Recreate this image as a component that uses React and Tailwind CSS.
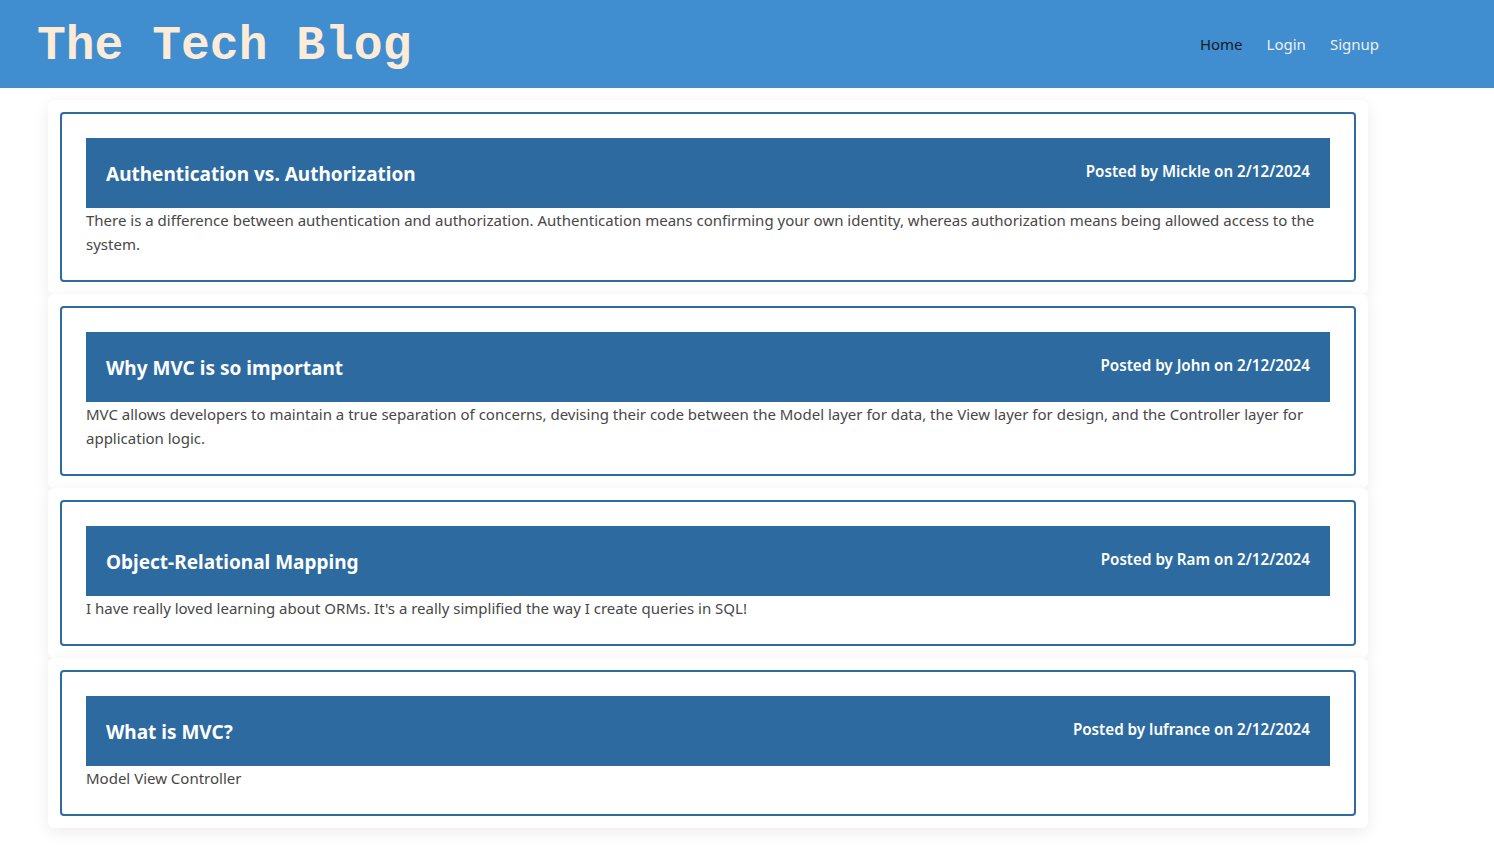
import React from 'react';

const posts = [
  {
    title: 'Authentication vs. Authorization',
    author: 'Mickle',
    date: '2/12/2024',
    body: 'There is a difference between authentication and authorization. Authentication means confirming your own identity, whereas authorization means being allowed access to the system.',
  },
  {
    title: 'Why MVC is so important',
    author: 'John',
    date: '2/12/2024',
    body: 'MVC allows developers to maintain a true separation of concerns, devising their code between the Model layer for data, the View layer for design, and the Controller layer for application logic.',
  },
  {
    title: 'Object-Relational Mapping',
    author: 'Ram',
    date: '2/12/2024',
    body: "I have really loved learning about ORMs. It's a really simplified the way I create queries in SQL!",
  },
  {
    title: 'What is MVC?',
    author: 'lufrance',
    date: '2/12/2024',
    body: 'Model View Controller',
  },
];

function PostCard({ post }) {
  return (
    <div className="bg-white rounded-md shadow-[0_4px_16px_rgba(0,0,0,0.08)] p-3">
      <div className="border-2 border-[#2d6a9f] rounded-[4px] p-6">
        <div className="bg-[#2d6a9f] h-[70px] px-5 flex items-center justify-between text-white">
          <h2 className="text-[19px] font-bold pt-[2px]">{post.title}</h2>
          <p className="text-[15.2px] font-semibold pb-[4px]">
            Posted by {post.author} on {post.date}
          </p>
        </div>
        <p className="text-[15px] leading-6 text-[#474747]">{post.body}</p>
      </div>
    </div>
  );
}

export default function App() {
  return (
    <div className="min-h-screen bg-white font-['Noto_Sans','Open_Sans',sans-serif]">
      <header className="h-[88px] bg-[#408dcf] flex items-center justify-between pl-[37px] pr-[115px]">
        <h1 className="font-['Liberation_Mono','Courier_New',monospace] font-bold text-[48px] text-[#fbebd7] leading-none pt-1">
          The Tech Blog
        </h1>
        <nav className="flex items-center gap-6 text-[15px]">
          <a className="text-[#141c2b]">Home</a>
          <a className="text-[#eef0f0]">Login</a>
          <a className="text-[#eef0f0]">Signup</a>
        </nav>
      </header>
      <main className="w-[1320px] ml-12 mt-3 flex flex-col">
        {posts.map((post) => (
          <PostCard key={post.title} post={post} />
        ))}
      </main>
    </div>
  );
}
